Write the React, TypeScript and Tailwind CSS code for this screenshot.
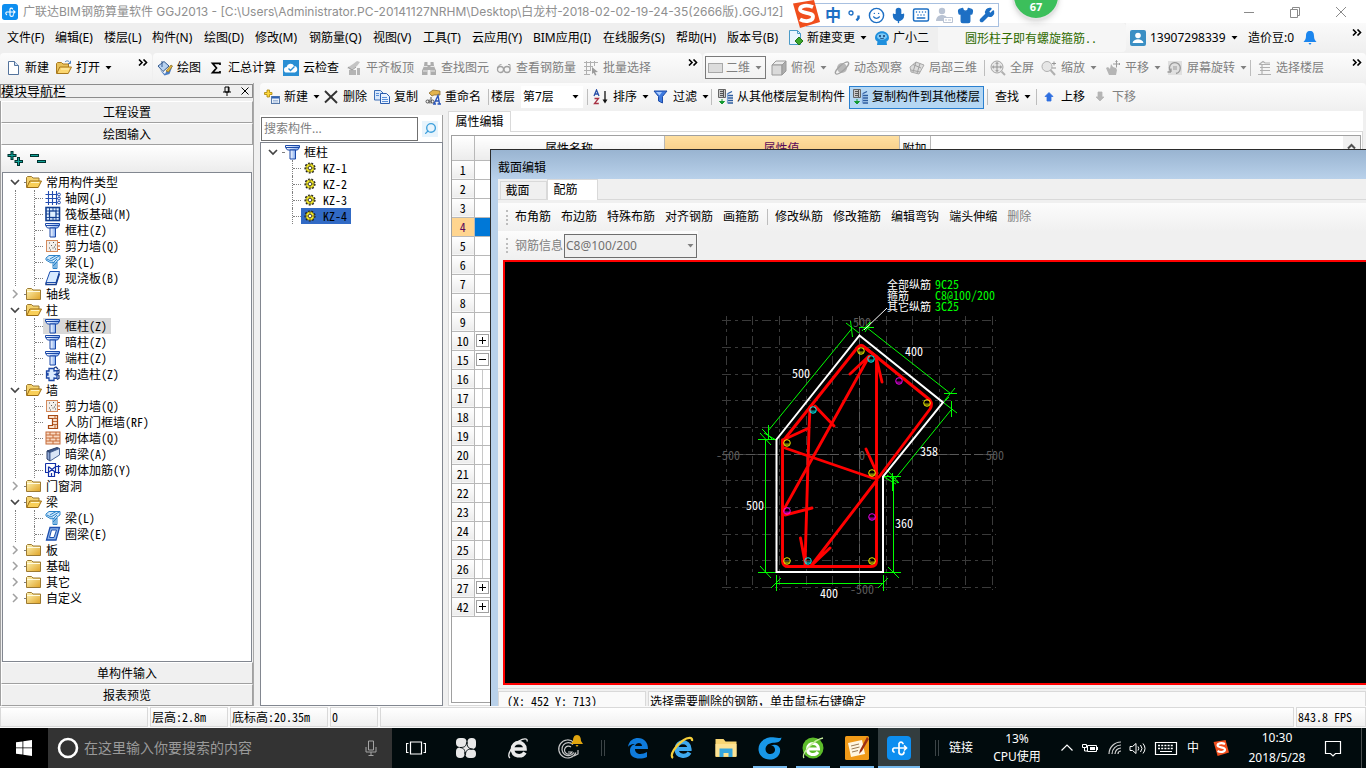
import React from "react";
import { Smile, Mic, Keyboard, Shirt, Wrench, Search } from "lucide-react";

type IconProps = { children: React.ReactNode; size?: number; box?: string };

function Svg({ children, size = 16, box = "0 0 16 16" }: IconProps) {
  return (
    <svg width={size} height={size} viewBox={box} fill="none" className="shrink-0" aria-hidden="true">
      {children}
    </svg>
  );
}

function Caret() {
  return (
    <svg width="7" height="4" viewBox="0 0 7 4" className="ml-[5px] shrink-0" aria-hidden="true">
      <path d="M0.5 0h6L3.5 3.5z" fill="currentColor" />
    </svg>
  );
}

function More() {
  return (
    <button aria-label="更多" className="ml-auto mr-1 mt-[6px] flex h-2 w-[10px] self-start text-black">
      <svg width="10" height="7" viewBox="0 0 10 7" fill="none" stroke="currentColor" strokeWidth="1.6">
        <path d="M1 .5l3 3-3 3M5.500 .5l3 3-3 3" />
      </svg>
    </button>
  );
}

function Sep() {
  return <span className="h-4 w-px shrink-0 bg-[#bdbdbd]" />;
}

/* ---------- icons ---------- */

const PageIcon = () => (
  <Svg>
    <path d="M3.500 1.500h6l4 4v9h-10z" fill="#fff" stroke="#54739c" />
    <path d="M9.500 1.500v4h4" fill="#cfe0f5" stroke="#54739c" />
  </Svg>
);

const OpenFolder = () => (
  <Svg>
    <path d="M.5 13.500v-10l1-1h4l1.500 1.500h5.500v3" fill="#e8c15a" stroke="#a8781c" />
    <path d="M.8 13.500l3-6.500h11.700l-3.300 6.500z" fill="#fbd66f" stroke="#a8781c" />
    <path d="M5 9h8" stroke="#fff3c0" />
    <path d="M9 2c2-2 4-1 5 1M14.500 .8v2.700H12" stroke="#4a7fc0" />
  </Svg>
);

const ClosedFolder = () => (
  <Svg>
    <defs>
      <linearGradient id="fold" x1="0" y1="0" x2="1" y2="1">
        <stop offset="0" stopColor="#fff6b8" />
        <stop offset="1" stopColor="#dfa326" />
      </linearGradient>
    </defs>
    <path d="M.5 13.500v-10l1-1h4l1.500 1.500h7.500v9.500z" fill="url(#fold)" stroke="#9c7a32" />
    <path d="M1 5.500h13" stroke="#fffbe0" />
  </Svg>
);

const TreeOpenFolder = () => (
  <Svg>
    <path d="M.5 13.500v-10l1-1h4l1.500 1.500h6v3" fill="#f5d36e" stroke="#9c7a32" />
    <path d="M.8 13.500l3-6.500h11.700l-3.300 6.500z" fill="#f9cf58" stroke="#9c6d14" />
    <path d="M5 8.500h8" stroke="#fff3c0" />
  </Svg>
);

const PaintIcon = () => (
  <Svg>
    <path d="M1 6l6-4.500 5 4.500-6 5.500z" fill="#b8d2f0" stroke="#32598f" />
    <path d="M5 1v6" stroke="#32598f" />
    <path d="M3 10l5 4 2-4 4-5 1.500 1-3 8-5 1.500z" fill="#4b7ec4" />
    <path d="M9 11l5-6 1.500 1-4 6z" fill="#e6b53b" stroke="#8c6a1a" strokeWidth=".6" />
  </Svg>
);

const SigmaIcon = () => (
  <Svg>
    <path d="M12 5V3.300H4.500L8.500 8l-4 4.700H12V11" stroke="#000" strokeWidth="1.700" />
  </Svg>
);

const CloudCheck = () => (
  <Svg>
    <rect width="16" height="16" fill="#2a8fd4" />
    <path d="M4 12.500a2.800 2.800 0 0 1-.4-5.600 4 4 0 0 1 7.500-1A3.400 3.400 0 0 1 12 12.500z" fill="#fff" />
    <path d="M5.500 8.500l2 2 4-4" stroke="#2a8fd4" strokeWidth="1.400" />
  </Svg>
);

const AlignTopIcon = () => (
  <Svg>
    <path d="M1 8l6-4 4-3 3 1-3 4-6 4z" fill="#c4c4c4" />
    <path d="M3 10h7v5H3zM11 8h3v7h-3z" fill="#b4b4b4" />
    <path d="M2 7l4 3 4-3" stroke="#999" />
  </Svg>
);

const BinocularsIcon = () => (
  <Svg>
    <path d="M3.500 2h3v3h3V2h3l.5 4 2 4.500V15h-5.500v-5h-3v5H1v-4.500L3 6z" fill="#adadad" />
    <path d="M3 6.500h3.500M9.500 6.500H13M2 11h4M10 11h4" stroke="#e8e8e8" />
  </Svg>
);

const GlassesIcon = () => (
  <Svg>
    <circle cx="4.500" cy="9.500" r="3" stroke="#a2a2a2" strokeWidth="1.300" />
    <circle cx="11" cy="9.500" r="3" stroke="#a2a2a2" strokeWidth="1.300" />
    <path d="M1.500 9c0-3 2-4.500 4-4.500M14 9.500V4.500h-2" stroke="#a2a2a2" />
  </Svg>
);

const BatchIcon = () => (
  <Svg>
    <path d="M1 2.500h14M1 6.500h9M1 10.500h7M3.500 1v14M7.500 1v10M11.500 1v5M1 14.500h6" stroke="#b0b0b0" />
    <path d="M9 7l6 5-3 .3 1.500 2.700-1.500.5-1.300-2.800L9 14z" fill="#9c9c9c" />
  </Svg>
);

const PlaneIcon = () => (
  <Svg>
    <rect x=".5" y="3.500" width="14" height="9" fill="#dcdcdc" stroke="#a8a8a8" />
  </Svg>
);

const CubeIcon = () => (
  <Svg>
    <path d="M1 5l4-4h10l-4 4z" fill="#ececec" stroke="#9a9a9a" />
    <path d="M1 5h10v10H1z" fill="#dadada" stroke="#9a9a9a" />
    <path d="M11 5l4-4v10l-4 4z" fill="#adadad" stroke="#9a9a9a" />
  </Svg>
);

const OrbitIcon = () => (
  <Svg>
    <circle cx="8" cy="8" r="5" fill="#b8b8b8" />
    <ellipse cx="8" cy="8" rx="8.500" ry="2.800" transform="rotate(-42 8 8)" stroke="#a2a2a2" strokeWidth="1.300" />
  </Svg>
);

const LocalIcon = () => (
  <Svg>
    <path d="M1 7l6-5 8 3-5 9-8-2z" fill="#dcdcdc" stroke="#aaa" />
    <path d="M4 4.500l8 3.500M7 2L4 12M11 3.500L8 13.500M2 10l9 2" stroke="#a2a2a2" />
  </Svg>
);

const FullIcon = () => (
  <Svg>
    <circle cx="7" cy="7" r="6" fill="#e6e6e6" stroke="#a5a5a5" />
    <path d="M7 2.500v9M2.500 7h9M5.700 4L7 2.500 8.300 4M5.700 10L7 11.500 8.300 10M4 5.700L2.500 7 4 8.300M10 5.700L11.500 7 10 8.300" stroke="#949494" />
    <path d="M11.500 11.500l3.500 3.500" stroke="#b0b0b0" strokeWidth="2" />
  </Svg>
);

const ZoomIcon = () => (
  <Svg>
    <circle cx="6" cy="6.500" r="5" fill="#e6e6e6" stroke="#b0b0b0" />
    <path d="M9.500 10l4.500 5" stroke="#b0b0b0" strokeWidth="2" />
    <path d="M11 3.500h4M13 1.500v4M11 8h4" stroke="#969696" />
  </Svg>
);

const PanIcon = () => (
  <Svg>
    <path d="M1 8l2-1 2 2 1-5 2 3 3 1 1 2-1 5H4z" fill="#b5b5b5" />
    <path d="M11.500 .5v7M8 4h7M10.500 1.800l1-1.300 1 1.300M14 3l1 1-1 1" stroke="#9c9c9c" />
  </Svg>
);

const RotateIcon = () => (
  <Svg>
    <rect x="1" y="1" width="14" height="14" fill="#e0e0e0" />
    <path d="M4 12a5.500 5.500 0 1 1 5 1.500M4 12V8.500M4 12H.5" stroke="#9a9a9a" strokeWidth="1.300" />
    <rect x="6" y="6" width="4" height="4" fill="#bdbdbd" />
  </Svg>
);

const FloorIcon = () => (
  <Svg>
    <path d="M3 4.500l4-3 2 1.500h5M4 4.500h10M4 7.500h10M4 10.500h10M2 14.500h13M6 4v10" stroke="#b0b0b0" strokeWidth="1.200" />
  </Svg>
);

const NewItemIcon = () => (
  <Svg>
    <path d="M3 1h2.500v2.500H8v2H5.500V8H3V5.500H.5v-2H3z" fill="#ffd83c" stroke="#a98408" strokeWidth=".8" />
    <rect x="7.500" y="7.500" width="8" height="7" fill="#e8f0fa" stroke="#5678a8" />
    <path d="M8 8.500h7" stroke="#2f62b5" strokeWidth="2" />
    <path d="M9 11.500h5M9 13h5" stroke="#88a4cc" strokeWidth=".7" />
  </Svg>
);

const CrossIcon = () => (
  <Svg>
    <path d="M2 2l12 12M14 2L2 13.500" stroke="#333" strokeWidth="1.900" />
  </Svg>
);

const CopyIcon = () => (
  <Svg>
    <path d="M.5 1.500h6l2.500 2.500v7H.5z" fill="#d9e8fb" stroke="#3c6fb8" />
    <path d="M6.500 4.500h6l3 3v7h-9z" fill="#eaf3ff" stroke="#2a5cad" />
    <path d="M8 8.500h5M8 10.500h6M8 12.500h6M2 4.500h3M2 6.500h3" stroke="#5a8fd8" />
  </Svg>
);

const RenameIcon = () => (
  <Svg>
    <path d="M4 4l4-3 7 1v4L9 6 7 7z" fill="#e2b34e" stroke="#7f5f22" strokeWidth=".7" />
    <path d="M1 12.500a1.500 1.500 0 1 0 3 0 1.500 1.500 0 1 0-3 0M4.200 10.500v4M6 8v6.500M6 12.500a1.500 1.500 0 1 0 3 0 1.500 1.500 0 1 0-3 0" stroke="#444" strokeWidth=".9" />
    <path d="M9 15l4-8.500L14.500 15M10.500 12h4M8 15h3M12.500 15H16" stroke="#2a55b8" strokeWidth="1.400" />
  </Svg>
);

const SortIcon = () => (
  <Svg>
    <path d="M1 7l2.500-6L6 7M2 5h3" stroke="#2850a8" strokeWidth="1.300" />
    <path d="M1.500 9.500h4l-4 5h4.300" stroke="#a83244" strokeWidth="1.300" />
    <path d="M12 2v10" stroke="#111" strokeWidth="1.300" />
    <path d="M9.500 10.500h5L12 14.500z" fill="#111" />
  </Svg>
);

const FunnelIcon = () => (
  <Svg>
    <path d="M1 2h13L9.500 7.500V14l-4-2V7.500z" fill="#3f7be0" stroke="#1e4da8" />
    <path d="M3 3h6L6.500 6.500z" fill="#a8cbff" />
  </Svg>
);

const FloorCopyIcon = () => (
  <Svg>
    <path d="M1.500 .5h7v8h-7z" fill="#c8c8c8" stroke="#666" />
    <path d="M3 2.500h4M3 4.500h4M3 6.500h4M6.500 1v7" stroke="#555" />
    <path d="M11 4.500l4-2M11 6.500h5M11 9h5M11 11.500h5M11 14h5" stroke="#2c5c9f" strokeWidth="1.300" />
    <path d="M10.500 4v10.500" stroke="#7ba2d8" strokeWidth="1.200" />
    <path d="M5 10v3M2.500 12.500h5L5 15z" stroke="#159a32" fill="#159a32" />
  </Svg>
);

function ArrowIcon({ color, down }: { color: string; down?: boolean }) {
  return (
    <Svg>
      <path d={down ? "M8 12L4 8h2V3h4v5h2z" : "M8 3.500l4 4h-2V12H6V7.500H4z"} fill={color} stroke={color} strokeWidth=".8" />
    </Svg>
  );
}

const ColumnIcon = () => (
  <Svg>
    <defs>
      <linearGradient id="col" x1="0" y1="0" x2="1" y2="0">
        <stop offset="0" stopColor="#fff" />
        <stop offset="1" stopColor="#7fa8ee" />
      </linearGradient>
    </defs>
    <path d="M.5 1.500h14v2l-2 2.500h-10l-2-2.500z" fill="url(#col)" stroke="#1b49a8" />
    <path d="M5 6h5.500v9H5z" fill="url(#col)" stroke="#1b49a8" />
    <path d="M1 3.500h13" stroke="#1b49a8" />
  </Svg>
);

const AxisIcon = () => (
  <Svg>
    <path d="M3.500 1v14M7.500 1v14M11.500 1v14M.5 4.500h12M.5 8.500h12M.5 12.500h12" stroke="#244db0" strokeWidth="1.100" />
    <circle cx="14" cy="4.500" r="1.400" stroke="#244db0" />
    <circle cx="14" cy="8.500" r="1.400" stroke="#244db0" />
    <circle cx="14" cy="12.500" r="1.400" stroke="#244db0" />
  </Svg>
);

const RaftIcon = () => (
  <Svg>
    <rect x="1" y="1.500" width="13.500" height="13" stroke="#123f91" strokeWidth="1.600" fill="#dff0ff" />
    <rect x="4.500" y="5" width="6.500" height="6.500" stroke="#123f91" strokeWidth="1.300" />
    <path d="M4.500 1v4M8 1v4M11 1v4M4.500 11v4M8 11v4M11 11v4M1 5h3.500M1 8h3.500M1 11.500h3.500M11 5h4M11 8h4M11 11.500h4" stroke="#123f91" strokeWidth=".9" />
  </Svg>
);

const ShearIcon = () => (
  <Svg>
    <rect x="1.500" y="2.500" width="11" height="11" fill="#f3eee9" stroke="#d48a5c" />
    <path d="M4 5h1M8 4.500h1M6 7.500h1M10 7h1M4 10h1M7.500 10h1M10 11h1M5 12h1M9 9h1" stroke="#555" />
    <path d="M13 4.500h2M13 8h2M13 11.500h2" stroke="#c5551c" />
  </Svg>
);

const BeamIcon = () => (
  <Svg>
    <path d="M1 4l3-2.500h11V5l-3 2v7.500H8V8L6 9 1 6z" fill="#cfe8fb" stroke="#2b83c9" />
    <path d="M2 5l4 2 8-5M8 9l4-4M8 12l4-4M5 5l6-3.500M10 14V8" stroke="#2b83c9" />
  </Svg>
);

const SlabIcon = () => (
  <Svg>
    <path d="M5 1.500h9.500L11 12.500H1z" fill="#d8ebff" stroke="#1d4fae" />
    <path d="M1 12.500v2h10l3.500-11" fill="none" stroke="#173f90" strokeWidth="1.500" />
  </Svg>
);

const TieColumnIcon = () => (
  <Svg>
    <path d="M4 2.500h5V5l3-.5v3l-2 1 2 1v3l-3-.5v2.500H4V12H1.500V9H3V7.500H1.500V5H4z" fill="#dcebff" stroke="#1c47a6" strokeWidth="1.300" />
    <path d="M9 2l2-1 2 2M12 5l2-1v3l-2 1.500 2 1v3l-2 1" stroke="#14357f" strokeWidth="1.200" />
  </Svg>
);

const DoorWallIcon = () => (
  <Svg>
    <path d="M3.500 1.500h9v13h-9v-3h4v-7h-4z" fill="#fbe3ce" stroke="#a84a14" strokeWidth="1.200" />
    <path d="M10 2v2.500M8 4.500h4M10 7.500h2.500M8 7.500h2M8 10.500h4M10 11v3" stroke="#a84a14" strokeWidth=".8" />
  </Svg>
);

const BrickIcon = () => (
  <Svg>
    <rect x="1" y="2" width="14" height="12" fill="#f9d9c2" stroke="#c46a38" />
    <path d="M1 5h14M1 8h14M1 11h14M5 2v3M11 2v3M8 5v3M5 8v3M11 8v3M8 11v3" stroke="#c46a38" />
  </Svg>
);

const HiddenBeamIcon = () => (
  <Svg>
    <path d="M2 5l10-3.500 2.500 1L5 6.500z" fill="#3d588c" stroke="#2b3f69" />
    <path d="M2 5l3 1.500V15l-3-2z" fill="#8fa9d6" stroke="#2b3f69" />
    <path d="M5 6.500l9.500-4V9L5 15z" fill="#d9e4f6" stroke="#4b6597" />
  </Svg>
);

const TieRebarIcon = () => (
  <Svg>
    <path d="M.5 1.500h10v3h5M.5 1.500v9h3v4h6v-4h5.500M3.500 4.500v6M10.500 1v9.500M13.500 3v9M4 5l6 5M10 5l-6 5M6.500 11v4" stroke="#1230a8" strokeWidth="1.200" />
  </Svg>
);

const RingBeamIcon = () => (
  <Svg>
    <path d="M5 1.500h9.500L11 14H1.500z" fill="#8db5ec" stroke="#1d4fae" strokeWidth="1.300" />
    <path d="M6.500 4h5L9 11.500H4.500z" fill="#fff" stroke="#1d4fae" />
  </Svg>
);

const GearIcon = () => (
  <Svg size={12} box="0 0 12 12">
    <circle cx="6" cy="6" r="4.600" stroke="#222" strokeWidth="2" strokeDasharray="1.800 1.400" />
    <circle cx="6" cy="6" r="4.200" fill="#f8ee28" stroke="#6b6200" strokeWidth=".6" />
    <circle cx="6" cy="6" r="1.800" stroke="#333" strokeWidth=".9" fill="#fff" />
    <path d="M6 1.800v2M6 8.200v2M1.800 6h2M8.200 6h2" stroke="#333" strokeWidth=".7" />
  </Svg>
);

function AppMark({ size }: { size: number }) {
  return (
    <Svg size={size} box="0 0 24 24">
      <rect width="24" height="24" rx="4" fill="#0d8ef0" />
      <path
        d="M12 17V7.500a2.200 2.200 0 0 1 4 0M12 12h7M17.500 10l2 2-2 2M12 12H7a2.200 2.200 0 0 0 0 4M12 16c0 3.500 5 3.500 5 0"
        stroke="#fff"
        strokeWidth="1.700"
        strokeLinecap="round"
      />
    </Svg>
  );
}

function SogouMark({ size }: { size: number }) {
  return (
    <Svg size={size} box="0 0 28 28">
      <path d="M1 3.500L22 0l6 22-20 6z" fill="#f04e1d" />
      <path d="M21 7c-6-2.500-13-1.500-13 2.300 0 5 13 2 13 7.500 0 4.500-8 5.500-13 2.500" stroke="#fff" strokeWidth="3.800" />
    </Svg>
  );
}

/* ---------- shared pieces ---------- */

const mono = "font-['Noto_Sans_Mono_CJK_SC','Noto_Sans_CJK_SC',monospace]";

type ToolProps = { icon?: React.ReactNode; label: string; w: string; off?: boolean; caret?: boolean };

function Tool({ icon, label, w, off, caret }: ToolProps) {
  return (
    <button disabled={off} className={`flex h-6 shrink-0 items-center whitespace-nowrap ${w} ${off ? "text-[#808080]" : "text-black"}`}>
      {icon && <span className="mr-1 flex w-4 shrink-0 justify-center">{icon}</span>}
      {label}
      {caret && <Caret />}
    </button>
  );
}

const menus: [string, string][] = [
  ["文件(F)", "w-12"],
  ["编辑(E)", "w-[49px]"],
  ["楼层(L)", "w-12"],
  ["构件(N)", "w-[52px]"],
  ["绘图(D)", "w-[51px]"],
  ["修改(M)", "w-[54px]"],
  ["钢筋量(Q)", "w-16"],
  ["视图(V)", "w-[50px]"],
  ["工具(T)", "w-[49px]"],
  ["云应用(Y)", "w-[61px]"],
  ["BIM应用(I)", "w-[70px]"],
  ["在线服务(S)", "w-[73px]"],
  ["帮助(H)", "w-[51px]"],
  ["版本号(B)", "w-[61px]"],
];

function TitleBar() {
  return (
    <header className="relative flex h-[23px] shrink-0 items-center bg-white pl-[2px] text-[#8f8f8f]">
      <AppMark size={16} />
      <h1 className="ml-[5px] whitespace-nowrap font-['Inter','Noto_Sans_CJK_SC',sans-serif] leading-4">
        广联达BIM钢筋算量软件 GGJ2013 - [C:\Users\Administrator.PC-20141127NRHM\Desktop\白龙村-2018-02-02-19-24-35(2666版).GGJ12]
      </h1>
      <div className="ml-auto flex items-center gap-[30px] pr-[17px]">
        <button aria-label="最小化"><Svg><path d="M3 8.500h10" stroke="#8a8a8a" /></Svg></button>
        <button aria-label="还原"><Svg><path d="M3.500 5.500h7v8h-7zM5.500 5.500v-2h7v8h-2" stroke="#8a8a8a" /></Svg></button>
        <button aria-label="关闭"><Svg><path d="M3 3l10 10M13 3L3 13" stroke="#8a8a8a" /></Svg></button>
      </div>
      <div className="absolute right-[367px] top-[3px] z-20 flex h-6 w-[193px] items-center border border-[#a8c0e0] bg-white text-[#1d6fc4]">
        <span className="absolute -left-[15px] -top-1"><SogouMark size={28} /></span>
        <span className="ml-[18px] w-[18px] text-base font-bold leading-5">中</span>
        <span className="ml-[3px] flex w-[18px] justify-center">
          <Svg><circle cx="4" cy="6" r="2" stroke="currentColor" strokeWidth="1.300" /><path d="M11.500 8.500v2.500l-2 2.500" stroke="currentColor" strokeWidth="2.400" /></Svg>
        </span>
        <Smile size={17} className="ml-1" />
        <Mic size={17} className="ml-[5px]" fill="currentColor" />
        <Keyboard size={18} className="ml-[5px]" />
        <span className="ml-[6px] text-[#b9c3d3]">
          <Svg size={17} box="0 0 17 17"><circle cx="6" cy="4" r="3.200" fill="currentColor" /><path d="M0 14c0-8 12-8 12 0z" fill="currentColor" /><path d="M7.500 10.500h9v5h-9z" fill="#fff" stroke="currentColor" /><path d="M9 13h2M12 13h3" stroke="currentColor" /></Svg>
        </span>
        <Shirt size={17} className="ml-1" fill="currentColor" />
        <Wrench size={16} className="ml-[5px]" fill="currentColor" />
      </div>
      <div className="absolute -top-[28px] right-[306px] z-20 flex h-12 w-12 items-end justify-center rounded-full border-2 border-[#e3e3e3] bg-[#3cbf5b] pb-1 text-[11px] font-bold leading-[14px] text-white shadow-md">
        67
      </div>
    </header>
  );
}

function MenuBar() {
  return (
    <nav className="flex h-[29px] shrink-0 items-center bg-[#efefef] pl-[7px] text-black">
      {menus.map(([label, w]) => (
        <button key={label} className={`shrink-0 whitespace-nowrap text-left leading-5 ${w}`}>{label}</button>
      ))}
      <button className="flex w-[86px] shrink-0 items-center whitespace-nowrap">
        <span className="mr-[3px]">
          <Svg>
            <path d="M1.500 .5h8l3 3v11h-11z" fill="#eaf5ff" stroke="#4b9bc8" />
            <path d="M9.500 .5v3h3" stroke="#4b9bc8" />
            <path d="M11 7l4 4-4 4-4-4z" fill="#3ca52a" stroke="#21751a" />
          </Svg>
        </span>
        新建变更
        <Caret />
      </button>
      <button className="flex w-[64px] shrink-0 items-center whitespace-nowrap">
        <Svg>
          <path d="M1 8c0-9 14-9 14 0 0 2-1.500 3-2.500 3.500L13 15H3l.5-3.500C2.500 11 1 10 1 8z" fill="#1f8fdd" />
          <ellipse cx="8" cy="6.500" rx="5" ry="3.300" fill="#7cc8f5" />
          <circle cx="6" cy="6" r="1" fill="#123a70" /><circle cx="10" cy="6" r="1" fill="#123a70" />
          <path d="M6 8q2 1.500 4 0" stroke="#123a70" strokeWidth=".8" />
        </Svg>
        <span className="ml-[3px]">广小二</span>
      </button>
      <div className="flex h-full w-[188px] shrink-0 items-center rounded-sm bg-[#f6f6f6] pl-[27px]">
        <a href="#tip" className={`whitespace-nowrap text-[#2f6b00] ${mono}`}>圆形柱子即有螺旋箍筋..</a>
      </div>
      <div className="flex h-full min-w-0 flex-1 items-center bg-gradient-to-b from-[#fafafa] to-[#efefef] pl-1">
        <button className="flex w-[118px] shrink-0 items-center">
          <Svg>
            <rect width="16" height="16" rx="2" fill="#3b8fc4" />
            <circle cx="8" cy="5.500" r="2.800" fill="#fff" /><path d="M2.500 13c1-5 10-5 11 0z" fill="#fff" />
          </Svg>
          <span className="ml-1">13907298339</span>
          <Caret />
        </button>
        <span className="whitespace-nowrap">造价豆:0</span>
        <span className="ml-2">
          <Svg><path d="M8 1c-3 0-4 2-4 5s-1 4-2.500 6h13C13 10 12 9 12 6s-1-5-4-5zM6.500 13h3l-1.500 2z" fill="#1c86ee" /></Svg>
        </span>
        <More />
      </div>
    </nav>
  );
}

function MainToolbar() {
  return (
    <div className="flex h-[31px] shrink-0 bg-[#efefef] py-px">
      <div className="flex w-[152px] shrink-0 items-center rounded bg-gradient-to-b from-[#fcfcfc] to-[#f0f0f0] pl-[5px]">
        <Tool icon={<PageIcon />} label="新建" w="w-[51px]" />
        <Tool icon={<OpenFolder />} label="打开" w="w-[60px]" caret />
        <More />
      </div>
      <div className="ml-px flex w-[549px] shrink-0 items-center rounded bg-gradient-to-b from-[#fcfcfc] to-[#f0f0f0] pl-1">
        <Tool icon={<PaintIcon />} label="绘图" w="w-[51px]" />
        <Tool icon={<SigmaIcon />} label="汇总计算" w="w-[75px]" />
        <Tool icon={<CloudCheck />} label="云检查" w="w-[63px]" />
        <Tool icon={<AlignTopIcon />} label="平齐板顶" w="w-[75px]" off />
        <Tool icon={<BinocularsIcon />} label="查找图元" w="w-[75px]" off />
        <Tool icon={<GlassesIcon />} label="查看钢筋量" w="w-[87px]" off />
        <Tool icon={<BatchIcon />} label="批量选择" w="w-[70px]" off />
        <More />
      </div>
      <div className="ml-px flex min-w-0 flex-1 items-center rounded bg-gradient-to-b from-[#fcfcfc] to-[#f0f0f0] pl-[2px]">
        <button disabled className="flex h-[23px] w-[61px] shrink-0 items-center border border-[#7a7a7a] pl-[2px] text-[#808080]">
          <PlaneIcon />
          <span className="ml-[2px] whitespace-nowrap">二维</span>
          <Caret />
        </button>
        <span className="w-[5px] shrink-0" />
        <Tool icon={<CubeIcon />} label="俯视" w="w-[63px]" off caret />
        <Tool icon={<OrbitIcon />} label="动态观察" w="w-[75px]" off />
        <Tool icon={<LocalIcon />} label="局部三维" w="w-[75px]" off />
        <Sep />
        <span className="w-[5px] shrink-0" />
        <Tool icon={<FullIcon />} label="全屏" w="w-[51px]" off />
        <Tool icon={<ZoomIcon />} label="缩放" w="w-16" off caret />
        <Tool icon={<PanIcon />} label="平移" w="w-[62px]" off caret />
        <Tool icon={<RotateIcon />} label="屏幕旋转" w="w-[83px]" off caret />
        <Sep />
        <span className="w-[5px] shrink-0" />
        <Tool icon={<FloorIcon />} label="选择楼层" w="w-[70px]" off />
        <More />
      </div>
    </div>
  );
}

/* ---------- navigation tree ---------- */

type Leaf = { label: string; icon: React.ReactNode; active?: boolean };
type Branch = { label: string; open?: boolean; items?: Leaf[] };

const tree: Branch[] = [
  {
    label: "常用构件类型",
    open: true,
    items: [
      { label: "轴网(J)", icon: <AxisIcon /> },
      { label: "筏板基础(M)", icon: <RaftIcon /> },
      { label: "框柱(Z)", icon: <ColumnIcon /> },
      { label: "剪力墙(Q)", icon: <ShearIcon /> },
      { label: "梁(L)", icon: <BeamIcon /> },
      { label: "现浇板(B)", icon: <SlabIcon /> },
    ],
  },
  { label: "轴线" },
  {
    label: "柱",
    open: true,
    items: [
      { label: "框柱(Z)", icon: <ColumnIcon />, active: true },
      { label: "暗柱(Z)", icon: <ColumnIcon /> },
      { label: "端柱(Z)", icon: <ColumnIcon /> },
      { label: "构造柱(Z)", icon: <TieColumnIcon /> },
    ],
  },
  {
    label: "墙",
    open: true,
    items: [
      { label: "剪力墙(Q)", icon: <ShearIcon /> },
      { label: "人防门框墙(RF)", icon: <DoorWallIcon /> },
      { label: "砌体墙(Q)", icon: <BrickIcon /> },
      { label: "暗梁(A)", icon: <HiddenBeamIcon /> },
      { label: "砌体加筋(Y)", icon: <TieRebarIcon /> },
    ],
  },
  { label: "门窗洞" },
  {
    label: "梁",
    open: true,
    items: [
      { label: "梁(L)", icon: <BeamIcon /> },
      { label: "圈梁(E)", icon: <RingBeamIcon /> },
    ],
  },
  { label: "板" },
  { label: "基础" },
  { label: "其它" },
  { label: "自定义" },
];

function Chevron({ open }: { open?: boolean }) {
  return (
    <svg width="10" height="10" viewBox="0 0 10 10" fill="none" className="shrink-0" aria-hidden="true">
      {open ? <path d="M1 3l4 4 4-4" stroke="#444" strokeWidth="1.700" /> : <path d="M3 1l4 4-4 4" stroke="#a0a0a0" strokeWidth="1.500" />}
    </svg>
  );
}

function NavPanel() {
  const big = `h-[22px] w-full shrink-0 border border-[#a0a0a0] border-l-white border-t-white bg-[#f0f0f0] text-center leading-5 ${mono}`;
  return (
    <aside className="flex w-[254px] shrink-0 flex-col border-r border-[#a8a8a8]">
      <div className="mt-px flex h-[14px] shrink-0 items-center border border-[#8c8c8c] bg-[#f0f0f0] pr-[2px]">
        <h2 className="text-[13px] leading-3">模块导航栏</h2>
        <button aria-label="固定" className="ml-auto mr-[8px]">
          <Svg size={10} box="0 0 10 10"><path d="M3 1h4v5H3zM6.300 1v5M1 6h8M5 6v4" stroke="#000" /></Svg>
        </button>
        <button aria-label="关闭面板">
          <Svg size={10} box="0 0 10 10"><path d="M1.500 1.500l7 7M8.500 1.500l-7 7" stroke="#000" /></Svg>
        </button>
      </div>
      <div className="mt-[3px] flex min-h-0 flex-1 flex-col border-l border-[#a0a0a0]">
        <button className={big}>工程设置</button>
        <button className={big}>绘图输入</button>
        <div className="flex h-[27px] shrink-0 items-center gap-[7px] bg-gradient-to-b from-white to-[#ececec] pl-[6px]">
          <button aria-label="全部展开">
            <Svg><path d="M5 0v9M.5 4.500h9M11.500 6v9M7.500 10.500H16" stroke="#00332f" strokeWidth="3" /><path d="M5 1v7M1.500 4.500h7M11.500 7v7M8.500 10.500H15" stroke="#12a49a" /></Svg>
          </button>
          <button aria-label="全部折叠">
            <Svg><path d="M0 4.500h9M7 10.500h9" stroke="#00332f" strokeWidth="3" /><path d="M1 4.500h7M8 10.500h7" stroke="#12a49a" /></Svg>
          </button>
        </div>
        <ul className={`ml-px mr-px min-h-0 flex-1 overflow-hidden border border-[#828790] bg-white pt-px ${mono}`}>
          {tree.map((b, i) => (
            <li key={i}>
              <div className="flex h-4 items-center pl-[7px] leading-4">
                <Chevron open={b.open} />
                <span className="ml-1 w-[2px] border-t border-dotted border-[#808080]" />
                {b.open ? <TreeOpenFolder /> : <ClosedFolder />}
                <span className="ml-[4px]">{b.label}</span>
              </div>
              {b.items && (
                <ul className="ml-3 border-l border-dotted border-[#808080] pl-[18px]">
                  {b.items.map((leaf) => (
                    <li key={leaf.label} className="flex h-4 items-center border-l border-dotted border-[#808080]">
                      <span className="w-2 shrink-0 border-t border-dotted border-[#808080]" />
                      <span className={`flex h-4 items-center whitespace-nowrap pl-[2px] pr-1 leading-4 ${leaf.active ? "bg-[#d9d9d9]" : ""}`}>
                        {leaf.icon}
                        <span className="ml-1">{leaf.label}</span>
                      </span>
                    </li>
                  ))}
                </ul>
              )}
            </li>
          ))}
        </ul>
        <button className={big}>单构件输入</button>
        <button className={big}>报表预览</button>
      </div>
    </aside>
  );
}

/* ---------- component list ---------- */

function ComponentToolbar() {
  return (
    <div className="flex h-[27px] shrink-0 items-center rounded bg-gradient-to-b from-[#fcfcfc] to-[#f0f0f0] pl-1 pt-px">
      <Tool icon={<NewItemIcon />} label="新建" w="w-[59px]" caret />
      <Tool icon={<CrossIcon />} label="删除" w="w-[51px]" />
      <Tool icon={<CopyIcon />} label="复制" w="w-[51px]" />
      <Tool icon={<RenameIcon />} label="重命名" w="w-[63px]" />
      <Sep />
      <label htmlFor="floor" className="ml-[2px] w-[30px] shrink-0 whitespace-nowrap">楼层</label>
      <div className="relative mr-1 w-[62px] shrink-0">
        <select id="floor" className="h-[22px] w-full appearance-none bg-white pl-[2px] text-black">
          <option>第7层</option>
        </select>
        <span className="pointer-events-none absolute right-1 top-[9px]"><Caret /></span>
      </div>
      <Sep />
      <span className="w-[5px] shrink-0" />
      <Tool icon={<SortIcon />} label="排序" w="w-[60px]" caret />
      <Tool icon={<FunnelIcon />} label="过滤" w="w-[58px]" caret />
      <Sep />
      <span className="w-[5px] shrink-0" />
      <Tool icon={<FloorCopyIcon />} label="从其他楼层复制构件" w="w-[132px]" />
      <button className="flex h-[23px] w-[135px] shrink-0 items-center whitespace-nowrap border border-[#2a80d0] bg-[#b5d7f3] pl-[2px]">
        <FloorCopyIcon />
        <span className="ml-1">复制构件到其他楼层</span>
      </button>
      <span className="w-[3px] shrink-0" />
      <Sep />
      <span className="w-[7px] shrink-0" />
      <Tool label="查找" w="w-[41px]" caret />
      <Sep />
      <span className="w-1 shrink-0" />
      <Tool icon={<ArrowIcon color="#2f6fe0" />} label="上移" w="w-[51px]" />
      <Tool icon={<ArrowIcon color="#b5b5b5" down />} label="下移" w="w-[51px]" off />
    </div>
  );
}

function ComponentList() {
  return (
    <section className="flex w-[183px] shrink-0 flex-col">
      <form className="mt-1 flex h-[27px] shrink-0 items-center border-r border-[#a0a0a0] bg-white pl-px" onSubmit={(e) => e.preventDefault()}>
        <input aria-label="搜索构件" placeholder="搜索构件..." className="h-6 w-[157px] border border-[#707070] bg-white px-[2px] text-xs placeholder:text-[#808080]" />
        <button aria-label="搜索" className="ml-1 flex h-4 w-4 items-center justify-center bg-[#e8f4fc] text-[#3ea0dc]">
          <Search size={13} className="-scale-x-100" strokeWidth={2.500} />
        </button>
      </form>
      <div className={`min-h-0 flex-1 border border-[#828790] bg-white pt-px ${mono}`}>
        <div className="flex h-4 items-center pl-[7px] leading-4">
          <Chevron open />
          <span className="ml-1 mr-px w-[2px] border-t border-dotted border-[#808080]" />
          <ColumnIcon />
          <span className="ml-[3px]">框柱</span>
        </div>
        <ul className="ml-[31px]">
          {["KZ-1", "KZ-2", "KZ-3", "KZ-4"].map((k) => (
            <li key={k} className="flex h-4 items-center border-l border-dotted border-[#808080]">
              <span className="w-2 shrink-0 border-t border-dotted border-[#808080]" />
              <span className={`flex h-4 items-center pl-[3px] pr-1 leading-4 ${k === "KZ-4" ? "bg-[#316ac5]" : ""}`}>
                <GearIcon />
                <span className="ml-[7px]">{k}</span>
              </span>
            </li>
          ))}
        </ul>
      </div>
    </section>
  );
}

/* ---------- property grid ---------- */

const rows = [1, 2, 3, 4, 5, 6, 7, 8, 9, 10, 15, 16, 17, 18, 19, 20, 21, 22, 23, 24, 25, 26, 27, 42];

function Toggle({ minus }: { minus?: boolean }) {
  return (
    <button aria-label={minus ? "折叠" : "展开"} className="ml-px flex h-[13px] w-[13px] items-center justify-center border border-[#a0a0a0] bg-white">
      <Svg size={7} box="0 0 7 7">
        <path d={minus ? "M0 3.500h7" : "M0 3.500h7M3.500 0v7"} stroke="#000" />
      </Svg>
    </button>
  );
}

function PropertyPanel() {
  const head = "border-b border-r border-[#b8b8b8] bg-gradient-to-b from-white to-[#ececec] p-0 font-normal";
  return (
    <section className="ml-[5px] mr-[3px] flex min-w-0 flex-1 flex-col">
      <div className="flex h-[21px] shrink-0">
        <button className="h-[21px] w-[63px] border border-b-0 border-[#d9d9d9] bg-white leading-5">属性编辑</button>
        <div className="flex-1 border-b border-[#d9d9d9] bg-white" />
      </div>
      <div className="flex min-h-0 flex-1 flex-col border border-t-0 border-[#d9d9d9] bg-white pb-[2px] pl-[2px] pr-px pt-[3px]">
        <div className="flex min-h-0 flex-1 items-start overflow-hidden border border-[#a0a0a0]">
          <table className={`w-[478px] shrink-0 table-fixed border-collapse ${mono}`}>
            <thead>
              <tr className="h-[24px]">
                <th className={`w-[22px] ${head}`} aria-label="序号" />
                <th className={`w-[190px] ${head}`}>属性名称</th>
                <th className="w-[235px] border-b border-r border-[#b8b8b8] bg-gradient-to-b from-[#ffdfa0] to-[#f3c67c] p-0 font-normal text-[#5a0a5a]">属性值</th>
                <th className={`w-[31px] ${head}`}>附加</th>
              </tr>
            </thead>
            <tbody>
              {rows.map((n) => (
                <tr key={n} className="h-[19px]">
                  <td className={`border-b border-r border-[#b8b8b8] p-0 text-center leading-4 ${n === 4 ? "bg-[#ffd58f] text-[#5a0a5a]" : "bg-gradient-to-b from-white to-[#ececec]"}`}>{n}</td>
                  <td className={`border-b border-r border-[#b8b8b8] p-0 ${n === 4 ? "bg-[#0078d7]" : ""}`}>
                    {(n === 10 || n === 15 || n === 27 || n === 42) && <Toggle minus={n === 15} />}
                    {n > 15 && n < 27 && <span className="ml-[7px] block h-[18px] w-[7px] border-l border-[#c8c8c8]" />}
                  </td>
                  <td className="border-b border-r border-[#b8b8b8] p-0" />
                  <td className="border-b border-r border-[#b8b8b8] p-0" />
                </tr>
              ))}
            </tbody>
          </table>
          <div className="ml-auto flex h-full w-[17px] justify-center bg-[#f0f0f0] pt-[6px]">
            <Svg size={9} box="0 0 9 9"><path d="M1 6.500L4.500 3 8 6.500" stroke="#505050" strokeWidth="2" /></Svg>
          </div>
        </div>
      </div>
    </section>
  );
}

/* ---------- section drawing ---------- */

const gridX = [726.5, 752.5, 779.5, 806.5, 832.5, 859.5, 886.5, 912.5, 939.5, 965.5, 992.5];
const gridY = [321.5, 348.5, 375.5, 401.5, 428.5, 455.5, 481.5, 508.5, 535.5, 561.5, 588.5];

const bars: [number, number, string][] = [
  [861, 352, "#ffff00"],
  [787, 444, "#ffff00"],
  [872, 474, "#ffff00"],
  [927, 404, "#ffff00"],
  [787, 562, "#ffff00"],
  [872, 562, "#ffff00"],
  [871, 360, "#00ffff"],
  [813, 411, "#00ffff"],
  [808, 562, "#00ffff"],
  [899, 382, "#ff00ff"],
  [787, 512, "#ff00ff"],
  [872, 518, "#ff00ff"],
];

const dims: [number, number, string][] = [
  [792, 379, "500"],
  [746, 511, "500"],
  [905, 357, "400"],
  [920, 457, "358"],
  [895, 529, "360"],
  [820, 599, "400"],
];

const ticks: [number, number, string][] = [
  [716, 461, "-500"],
  [859, 461, "0"],
  [986, 461, "500"],
  [853, 328, "500"],
  [850, 595, "-500"],
];

function SectionDrawing() {
  return (
    <svg width="861" height="420" viewBox="505 263 861 420" fill="none" className={`block ${mono}`} role="img" aria-label="柱截面配筋图">
      <g stroke="#3a3a3a" strokeDasharray="9 4 3 4" shapeRendering="crispEdges">
        {gridX.map((x) => <path key={x} d={`M${x} 317V591`} />)}
        {gridY.map((y) => <path key={y} d={`M722 ${y}H996`} />)}
      </g>
      <path d="M859.500 317V591M722 455.500H996" stroke="#585858" strokeDasharray="9 3" shapeRendering="crispEdges" />
      <g fill="#5a5a5a" fontSize="12">
        {ticks.map(([x, y, t]) => <text key={`${x}-${y}`} x={x} y={y}>{t}</text>)}
      </g>
      <g stroke="#00ff00">
        <path d="M851.500 330L768 432M850.500 322l2 16M846 324l13 10M764 434l12 7M768.500 426v15M762 430l10 10" />
        <path d="M866 328L950.500 394.500M859 328.500h15M862 332l8-9M871 323l-6 10M944 394.500h13M945 401l10-12M944 403l5-5" />
        <path d="M951 411L895 480M951.500 402v16M944 404l13 10M884 478l12 7M892.500 474v18M887 476l11 8" />
        <path d="M893.500 478v95M884 477.500h17M888 472l11 12M884 573.500h17M888 568l11 11" />
        <path d="M765.500 440v133M758 440.500h18M760 434l11 12M758 573.500h18M760 567l11 12" />
        <path d="M776 584.500h107M776.500 576v16M771 589l10-10M883.500 576v16M878 589l10-10" />
      </g>
      <path d="M864 331L887 309" stroke="#fff" />
      <path d="M859.500 336.500L943 403.500 883 477.500V573H776.500V440.500z" stroke="#fff" strokeWidth="2" />
      <g stroke="#ff0000" strokeWidth="2.900" strokeLinejoin="round" strokeLinecap="round">
        <path d="M783 442L857.500 348.500Q861 344 865 348.500L930 401Q933 405 930 410L879 478Q876 480 871 478.500L785 449" />
        <path d="M782.500 441V562Q783 567.500 788 567.500H871Q876.500 567.500 876.500 562V359M865 349l12 9" />
        <path d="M783 512L869 357.500M850 375l19-18M876 358l6 25" />
        <path d="M866 450l11 24M877 481L811 567M830 549l-18 17" />
        <path d="M810 408l-1 22-4 136M800.500 539l4.500 24M815 407l19 20M783 441l26-12M785 516l27-7" />
      </g>
      {bars.map(([x, y, c]) => (
        <g key={`${x}-${y}`} stroke={c}>
          <circle cx={x} cy={y} r="3.300" strokeWidth=".9" />
          <path d={`M${x - 3} ${y + 1}h6M${x - 2} ${y + 2}h4`} strokeWidth=".6" />
        </g>
      ))}
      <g fill="#fff" fontSize="12">
        {dims.map(([x, y, t]) => <text key={`${x}-${y}`} x={x} y={y}>{t}</text>)}
      </g>
      <g fill="#fff" fontSize="11">
        <text x="887" y="290">全部纵筋</text>
        <text x="887" y="301">箍筋</text>
        <text x="887" y="312">其它纵筋</text>
      </g>
      <g fill="#00ff00" fontSize="12">
        <text x="935" y="290">9C25</text>
        <text x="935" y="301">C8@100/200</text>
        <text x="935" y="312">3C25</text>
      </g>
    </svg>
  );
}

function Grip() {
  return <span className="ml-[8px] mr-[7px] h-[15px] w-0 shrink-0 border-l-2 border-dotted border-[#bdbdbd]" />;
}

function SectionDialog() {
  return (
    <section className="absolute bottom-0 left-[236px] right-0 top-[66px] z-10 flex flex-col overflow-hidden border-l border-t border-[#2b2b2b] bg-[#b9d1ea]">
      <h2 className="h-[29px] shrink-0 bg-gradient-to-b from-[#99b4d1] to-[#b9d1ea] pl-[7px] pt-[10px] leading-4">截面编辑</h2>
      <div className="ml-[7px] flex min-h-0 flex-1 flex-col bg-[#f0f0f0]">
        <div className="flex h-[21px] shrink-0 items-end border-b border-[#d9d9d9] pl-[2px]" role="tablist">
          <button role="tab" className="h-[18px] w-[47px] border border-b-0 border-[#d9d9d9] pr-3 leading-[18px]">截面</button>
          <button role="tab" className="-mb-px h-[21px] w-[51px] border border-b-0 border-[#d9d9d9] bg-white pb-px pr-[14px] leading-[18px]">配筋</button>
        </div>
        <div className="mt-[3px] flex h-7 shrink-0 items-center whitespace-nowrap bg-gradient-to-b from-[#fcfcfc] to-[#f0f0f0]">
          <Grip />
          <div className="flex items-center gap-[10px]">
            {["布角筋", "布边筋", "特殊布筋", "对齐钢筋", "画箍筋"].map((t) => <button key={t}>{t}</button>)}
          </div>
          <span className="ml-[8px] mr-[7px] flex"><Sep /></span>
          <div className="flex items-center gap-[10px]">
            {["修改纵筋", "修改箍筋", "编辑弯钩", "端头伸缩"].map((t) => <button key={t}>{t}</button>)}
            <button disabled className="text-[#808080]">删除</button>
          </div>
        </div>
        <div className="flex h-7 w-[200px] shrink-0 items-center whitespace-nowrap bg-gradient-to-b from-[#fcfcfc] to-[#f0f0f0] pt-px text-[#808080]">
          <Grip />
          <label htmlFor="rebar">钢筋信息</label>
          <div className="relative ml-px w-[133px] shrink-0">
            <select id="rebar" disabled className="block h-6 w-full appearance-none border border-[#6e6e6e] bg-[#f0f0f0] pl-px text-xs text-[#707070] opacity-100">
              <option>C8@100/200</option>
            </select>
            <span className="pointer-events-none absolute right-[3px] top-[10px] flex"><Caret /></span>
          </div>
        </div>
        <div className="ml-[5px] mt-px min-h-0 flex-1 overflow-hidden border-2 border-r-0 border-[#ff0000] bg-black">
          <SectionDrawing />
        </div>
        <div className={`mt-[3px] flex h-[18px] shrink-0 gap-[2px] border-t border-[#d9d9d9] pt-[2px] ${mono}`}>
          <div className="h-[22px] w-[148px] shrink-0 border border-[#d9d9d9] bg-[#fafafa] pl-2 leading-[18px]">(X: 452 Y: 713)</div>
          <div className="h-[22px] flex-1 border border-[#d9d9d9] bg-[#fafafa] pl-px leading-[18px]">选择需要删除的钢筋，单击鼠标右键确定</div>
        </div>
      </div>
    </section>
  );
}

function StatusBar() {
  const cell = "h-5 border border-[#d9d9d9] bg-gradient-to-b from-white to-[#f0f0f0] pl-px leading-[18px] whitespace-nowrap";
  return (
    <footer className={`flex h-[22px] shrink-0 items-center gap-[2px] bg-[#fafafa] ${mono}`}>
      <div className={`w-[148px] shrink-0 ${cell}`} />
      <div className={`w-[78px] shrink-0 ${cell}`}>层高:2.8m</div>
      <div className={`w-[98px] shrink-0 ${cell}`}>底标高:20.35m</div>
      <div className={`w-[48px] shrink-0 ${cell}`}>0</div>
      <div className={`min-w-0 flex-1 ${cell}`} />
      <div className={`w-[70px] shrink-0 ${cell}`}>843.8 FPS</div>
    </footer>
  );
}

/* ---------- taskbar ---------- */

function Task({ label, w, children, run, active }: { label: string; w: string; children: React.ReactNode; run?: boolean; active?: boolean }) {
  return (
    <button aria-label={label} className={`flex h-full shrink-0 flex-col items-center ${w} ${active ? "bg-[#333d3f]" : ""}`}>
      <span className="flex flex-1 items-center">{children}</span>
      <span className={`-mt-[2px] h-[2px] ${active ? "w-full" : "w-[34px]"} ${run || active ? "bg-[#76b9ed]" : ""}`} />
    </button>
  );
}

function Taskbar() {
  return (
    <footer className="flex h-10 shrink-0 items-center bg-[#010b0d] text-white">
      <button aria-label="开始" className="flex h-full w-12 shrink-0 items-center justify-center bg-black">
        <Svg><path d="M0 2.300L6.500 1.400V7.500H0zM7.300 1.300L16 0v7.500H7.300zM0 8.300h6.500v6.300L0 13.700zM7.300 8.300H16V16l-8.700-1.300z" fill="#fff" /></Svg>
      </button>
      <div className="flex h-full w-[344px] shrink-0 items-center bg-[#333] pl-[9px]">
        <Svg size={22} box="0 0 22 22"><circle cx="11" cy="11" r="9" stroke="#fff" strokeWidth="2.600" /></Svg>
        <input aria-label="搜索" placeholder="在这里输入你要搜索的内容" className="ml-[5px] min-w-0 flex-1 bg-transparent text-sm leading-5 placeholder:text-[#9a9a9a]" />
        <span className="mr-[13px]">
          <Svg><path d="M5.500 1h5v9h-5zM3 7v5h10V7M8 12v3.500M5.500 15.500h5" stroke="#a5a5a5" /></Svg>
        </span>
      </div>
      <Task label="任务视图" w="w-[48px]">
        <Svg size={20} box="0 0 20 20"><path d="M4.500 4h11v12h-11zM2.500 5.500H.5v9h2M17.500 5.500h2v9h-2" stroke="#fff" strokeWidth="1.200" /></Svg>
      </Task>
      <Task label="浏览器" w="w-[52px]">
        <Svg size={22} box="0 0 22 22">
          <g fill="#e8e8e8">
            <rect x="1" y="1" width="10.500" height="9" rx="4" />
            <rect x="12.500" y="1" width="8.500" height="11" rx="4" />
            <rect x="1" y="10.500" width="8.500" height="10.500" rx="4" />
            <rect x="10.500" y="12.500" width="10.500" height="8.500" rx="4" />
            <path d="M7 7h8v8H7z" />
          </g>
          <path d="M5 10.500c4 0 6.500-1 6.500-5M12 5c0 4 1 7 6 7M10 17c0-4-1-6-5-6.500M17 12c-4 0-6.500 1-6.500 6" stroke="#010b0d" strokeWidth=".9" />
        </Svg>
      </Task>
      <Task label="网络浏览器" w="w-[52px]">
        <Svg size={22} box="0 0 22 22">
          <path d="M5.500 12h12.500c0-8.500-12.500-8.500-12.500 0 0 8 9.500 8.500 12.500 3.500" stroke="#eaeaea" strokeWidth="3.600" />
          <path d="M3 21c-4-3 3-13 9-17 4-2.500 9-3.500 8 .5" stroke="#eaeaea" strokeWidth="1.300" />
        </Svg>
      </Task>
      <Task label="消息" w="w-[52px]">
        <Svg size={28} box="0 0 28 28">
          <path d="M18 8.500a9 9 0 1 0 2 10M17 10.500a6.500 6.500 0 1 0 1 8M15 13a4 4 0 1 0 1 5h-4M18 22l4-2v-4" stroke="#c8c8c8" strokeWidth="1.200" />
          <path d="M21 1c-3 0-4 3-4 6l-2 3h12l-2-3c0-3-1-6-4-6zM19.500 11h3l-1.500 2z" fill="#e0a50f" />
        </Svg>
      </Task>
      <span className="ml-[5px] mr-[9px] h-4 w-1 shrink-0 border-l border-r border-[#3c4446]" />
      <Task label="Edge" w="w-[48px]">
        <Svg size={22} box="0 0 22 22">
          <path d="M1 10C2 3 7 1 11 1c6 0 10 4 10 11H8c0 6 7 6 12 3v5C13 23 3 22 3 14c0-4 2-6 5-7-5 0-6 2-7 3zM8 9h7c0-4-6-4-7 0z" fill="#0f7bdc" />
        </Svg>
      </Task>
      <Task label="Internet Explorer" w="w-[40px]">
        <Svg size={24} box="0 0 24 24">
          <path d="M7 13h12.500c0-9-13-9-13 0 0 8 10 8.500 13 3.500" stroke="#3ea9ee" strokeWidth="4.200" />
          <path d="M3 22c-4-3 3-13 10-17.500C18 1 23 1 22 5" stroke="#f5cf3b" strokeWidth="2.200" />
        </Svg>
      </Task>
      <Task label="文件资源管理器" w="w-[48px]">
        <Svg size={22} box="0 0 22 22">
          <path d="M.5 2h8l2 2.500h11V20H.5z" fill="#f8d674" />
          <path d="M.5 7h21v12H.5z" fill="#fde394" />
          <path d="M4.500 20v-8.500h13V20h-4v-4h-5v4z" fill="#35a6dd" />
        </Svg>
      </Task>
      <Task label="广联达" w="w-[40px]" run>
        <Svg size={24} box="0 0 24 24">
          <path d="M23.500 1.500C20 3 15 .5 11 1.500 4 3 .5 8 .5 13c0 6 5 10.500 11 10.500 7 0 11.500-5 10.500-11-1-3-5-5-9-3 5 0 6 8-.5 8.500-6.500 0-7-9.500 1-11 4-.7 9 .5 10-5.500z" fill="#1897e8" />
        </Svg>
      </Task>
      <Task label="安全浏览器" w="w-[46px]" run>
        <Svg size={24} box="0 0 24 24">
          <circle cx="12" cy="12" r="10.500" fill="#5cbc2a" />
          <path d="M7 13h10.500c0-7.500-11-7.500-11 0 0 6.500 7.500 7 10.500 3" stroke="#fff" strokeWidth="3" />
          <path d="M3 22C0 18 12 4 22 2" stroke="#c5ef9c" strokeWidth="1.300" />
        </Svg>
      </Task>
      <Task label="记事" w="w-[42px]" run>
        <Svg size={24} box="0 0 24 24">
          <rect width="24" height="24" rx="1.500" fill="#f09a18" />
          <path d="M3 7l14-3 3 14-14 3z" fill="#fff6e0" />
          <path d="M6 10l8-2M6.500 13l8-2M7 16l6-1.500" stroke="#9a7a55" />
          <path d="M22 1l-7 13-1 4 3-3L24 3z" fill="#9c2f12" />
        </Svg>
      </Task>
      <Task label="钢筋算量" w="w-[42px]" active><AppMark size={24} /></Task>
      <span className="ml-[15px] h-4 w-1 shrink-0 border-l border-r border-[#3c4446]" />
      <span className="ml-[10px] shrink-0">链接</span>
      <div className="ml-auto w-[56px] shrink-0 text-center leading-[18px]">
        13%<br />CPU使用
      </div>
      <div className="ml-[14px] flex shrink-0 items-center">
        <button aria-label="显示隐藏的图标" className="w-[23px]"><Svg><path d="M2.500 10.500L8 5l5.500 5.500" stroke="#fff" strokeWidth="1.200" /></Svg></button>
        <span className="w-[25px]"><Svg><path d="M5.500 5.500h9v6h-9zM15.500 7v3M.5 4.500h4v3h-4zM2.500 8v3h3" stroke="#fff" /><path d="M8 7h5v3H8z" fill="#fff" /></Svg></span>
        <span className="w-[22px]"><Svg><path d="M2 14A12 12 0 0 1 14 2M5 14a9 9 0 0 1 9-9M8 14a6 6 0 0 1 6-6M11 14a3 3 0 0 1 3-3" stroke="#cfcfcf" strokeWidth="1.200" /></Svg></span>
        <span className="w-[25px]"><Svg size={17} box="0 0 17 16"><path d="M1 6h2.500L7 3v10L3.500 10H1zM9 6q1.500 2 0 4M11.500 4.500q3 3.500 0 7M14 3q4 5 0 10" stroke="#fff" /></Svg></span>
        <span className="w-[33px]"><Svg size={24} box="0 0 24 24"><path d="M1.500 6.500h21v12h-21z" stroke="#fff" strokeWidth="1.200" /><path d="M4 9.500h16M4 12.500h16" stroke="#fff" strokeDasharray="2 1.200" strokeWidth="1.300" /><path d="M6 15.500h12" stroke="#fff" /></Svg></span>
        <span className="w-[26px]">中</span>
        <SogouMark size={16} />
      </div>
      <div className="ml-[14px] w-[68px] shrink-0 text-center leading-5">
        10:30<br />2018/5/28
      </div>
      <button aria-label="通知" className="ml-[13px] mr-[19px] shrink-0">
        <Svg size={18} box="0 0 18 18"><path d="M1.500 2.500h15v12h-5L9 17l-2.500-2.500h-5z" stroke="#fff" strokeWidth="1.200" /></Svg>
      </button>
      <span className="mr-1 h-full w-px shrink-0 bg-[#4a4f50]" />
    </footer>
  );
}

export default function App() {
  return (
    <div className="flex h-screen flex-col overflow-hidden bg-[#f0f0f0] font-['Noto_Sans','Noto_Sans_CJK_SC',sans-serif] text-xs text-black">
      <TitleBar />
      <MenuBar />
      <MainToolbar />
      <div className="flex min-h-0 flex-1">
        <NavPanel />
        <main className="relative ml-[6px] flex min-w-0 flex-1 flex-col">
          <ComponentToolbar />
          <div className="flex min-h-0 flex-1 pt-px">
            <ComponentList />
            <PropertyPanel />
          </div>
          <div className="pointer-events-none absolute inset-0 -left-[6px] [&>*]:pointer-events-auto">
            <SectionDialog />
          </div>
        </main>
      </div>
      <StatusBar />
      <Taskbar />
    </div>
  );
}
